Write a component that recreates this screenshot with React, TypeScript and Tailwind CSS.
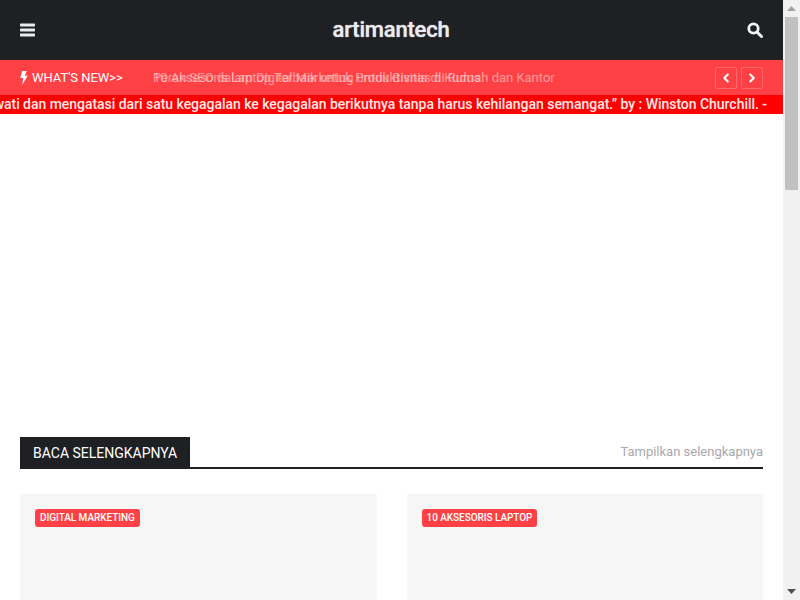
import React from 'react';
import { ChevronLeft, ChevronRight } from 'lucide-react';

const roboto = "font-['Roboto','Liberation_Sans',sans-serif]";

const Tag = ({ label }: { label: string }) => (
  <span className="inline-block rounded-[3px] bg-[#ff4145] px-[5px] text-[10px] leading-[18px] font-medium tracking-[-0.05px] text-white">
    {label}
  </span>
);

const Card = ({ label }: { label: string }) => (
  <div className="h-[300px] bg-[#f6f6f6] p-[15px]">
    <div className="flex">
      <Tag label={label} />
    </div>
  </div>
);

const Scrollbar = () => (
  <div className="flex w-[17px] shrink-0 flex-col bg-[#f1f1f1]">
    <div className="flex h-[17px] items-center justify-center">
      <svg width="9" height="5" viewBox="0 0 9 5"><path d="M4.500 0 9 5H0z" fill="#a3a3a3" /></svg>
    </div>
    <div className="mx-[2px] h-[173px] bg-[#c1c1c1]" />
    <div className="flex-1" />
    <div className="flex h-[17px] items-center justify-center">
      <svg width="9" height="5" viewBox="0 0 9 5"><path d="M0 0h9L4.500 5z" fill="#505050" /></svg>
    </div>
  </div>
);

export default function App() {
  return (
    <div className={`flex h-screen overflow-hidden bg-white ${roboto}`}>
      <div className="min-w-0 flex-1">
        <header className="flex h-[60px] items-center justify-between bg-[#1e2024] px-5 text-[#e8eaed]">
          <svg width="15" height="14" viewBox="0 0 15 14" fill="currentColor">
            <rect y="0.500" width="15" height="3" rx="0.700" />
            <rect y="5.500" width="15" height="3" rx="0.700" />
            <rect y="10.500" width="15" height="3" rx="0.700" />
          </svg>
          <h1 className="text-[22px] leading-none font-medium tracking-[-0.2px] [text-shadow:0_0_1px_#e8eaed]">artimantech</h1>
          <svg width="16" height="16" viewBox="0 0 16 16" fill="none" stroke="#f2f4f6">
            <circle cx="6.500" cy="6.500" r="4.700" strokeWidth="2.800" />
            <path d="m10.200 10.200 4.300 4.300" strokeWidth="3" strokeLinecap="round" />
          </svg>
        </header>

        <div className="flex h-[35px] items-center bg-[#ff4145] px-5 text-white">
          <div className="flex w-[133px] shrink-0 items-center gap-[4px] text-[13px] tracking-[-0.05px]">
            <svg width="8" height="14" viewBox="0 0 7 13" fill="currentColor">
              <path d="M1.800 0H6L4.300 4.300H7L1.800 13l1-6.400H0z" />
            </svg>
            <span>WHAT'S NEW&gt;&gt;</span>
          </div>
          <div className="relative h-[18px] flex-1 text-[13px] leading-[18px] tracking-[-0.015px] whitespace-nowrap">
            <span className="absolute top-0 left-0 opacity-45">10 Aksesoris Laptop Terbaik untuk Produktivitas di Rumah dan Kantor</span>
            <span className="absolute top-0 left-0 opacity-45">Peran SEO dalam Digital Marketing untuk Bisnis di Kudus</span>
          </div>
          <div className="flex gap-[4px]">
            <button className="flex h-[22px] w-[22px] items-center justify-center rounded-[2px] border border-white/20">
              <ChevronLeft size={14} strokeWidth={3.500} />
            </button>
            <button className="flex h-[22px] w-[22px] items-center justify-center rounded-[2px] border border-white/20">
              <ChevronRight size={14} strokeWidth={3.500} />
            </button>
          </div>
        </div>

        <div className="flex h-[19px] justify-end overflow-hidden bg-[#ff0000] pr-[16px] text-[14px] leading-[18px] font-medium tracking-[-0.035px] whitespace-nowrap text-[#ffe9e9]">
          <span>“Sukses adalah kemampuan untuk melewati dan mengatasi dari satu kegagalan ke kegagalan berikutnya tanpa harus kehilangan semangat.” by : Winston Churchill. -</span>
        </div>

        <main className="px-5 pt-[323px]">
          <div className="flex items-end justify-between border-b-2 border-[#1e2024]">
            <h2 className="-mb-[2px] bg-[#1e2024] px-[13px] text-[14px] leading-[32px] text-white">BACA SELENGKAPNYA</h2>
            <a className="pb-[8px] text-[13px] leading-[15px] text-[#a8a8ae]">Tampilkan selengkapnya</a>
          </div>
          <div className="mt-[25px] grid grid-cols-2 gap-[30px]">
            <Card label="DIGITAL MARKETING" />
            <Card label="10 AKSESORIS LAPTOP" />
          </div>
        </main>
      </div>
      <Scrollbar />
    </div>
  );
}
